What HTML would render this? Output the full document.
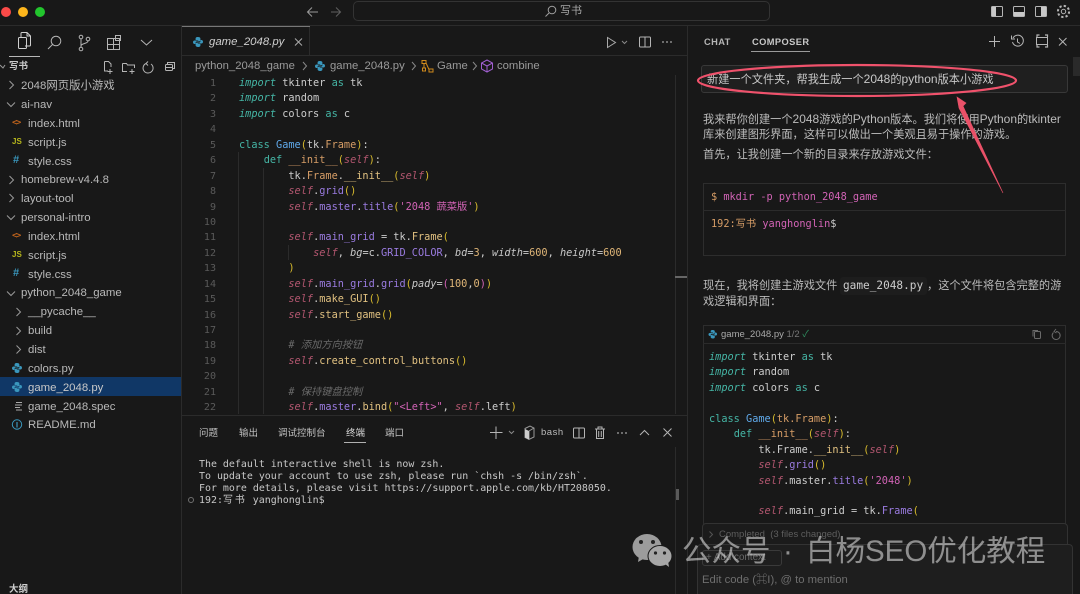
<!DOCTYPE html>
<html><head><meta charset="utf-8">
<style>
*{margin:0;padding:0;box-sizing:border-box}
html,body{width:1080px;height:594px;overflow:hidden;background:#181818}
body{position:relative;font-family:"Liberation Sans","Noto Sans CJK SC",sans-serif;color:#c4c4c4}
.a{position:absolute;white-space:pre}
.l{position:absolute;background:#2b2b2b}
.r{position:absolute;font-size:11.4px;line-height:16px;color:#b9b9b9;white-space:pre}
.code{position:absolute;font-family:"DejaVu Sans Mono","Noto Sans CJK SC",monospace;font-size:10.26px;line-height:15.43px;white-space:pre;color:#cccccc}
.n{position:absolute;left:182px;width:34px;text-align:right;font-family:"DejaVu Sans Mono",monospace;font-size:10.05px;line-height:15.43px;color:#5a5a5a;white-space:pre}
.k{color:#45b5a5;font-style:italic}.c{color:#45b5a5}.g{color:#5fa8e8}.o{color:#d69d66}.y{color:#d7ba2d}
.s{color:#b2566f;font-style:italic}.p{color:#9a7be0}.f{color:#e0c080}.h{color:#d163b5}.m{color:#6a6a6a;font-style:italic}
.i{font-style:italic;color:#c8c8c8}.u{color:#dfb577}
.t{position:absolute;font-size:9.5px;line-height:14px;color:#c0c0c0;white-space:pre}
.ch{position:absolute;font-size:11.2px;line-height:16px;color:#bcbcbc;white-space:pre}
.ch b,.q{font-weight:normal;font-size:12px}
svg{position:absolute;overflow:visible}
.ic{fill:none;stroke:#b5b5b5;stroke-width:1}
</style></head><body>

<!-- title bar -->
<div class="a" style="left:1px;top:7px;width:10px;height:10px;border-radius:50%;background:#fb4a48"></div>
<div class="a" style="left:18px;top:7px;width:10px;height:10px;border-radius:50%;background:#fdb61c"></div>
<div class="a" style="left:35px;top:7px;width:10px;height:10px;border-radius:50%;background:#22c52d"></div>
<svg style="left:0;top:0" width="1080" height="26" class="ic">
<path d="M318 12H308M312 7.500L307.500 12L312 16.500" stroke="#9a9a9a"/>
<path d="M331 12H340M336 7.500L340.500 12L336 16.500" stroke="#5f5f5f"/>
<circle cx="552" cy="10" r="3.800" stroke="#a0a0a0"/><path d="M549 13L545.500 16.500" stroke="#a0a0a0"/>
<rect x="991.500" y="6.500" width="11" height="10" rx="1"/><rect x="992" y="7" width="4" height="9" fill="#c8c8c8" stroke="none"/>
<rect x="1013.500" y="6.500" width="11" height="10" rx="1"/><rect x="1014" y="12" width="10" height="4" fill="#c8c8c8" stroke="none"/>
<rect x="1035.500" y="6.500" width="11" height="10" rx="1"/><rect x="1041" y="7" width="5" height="9" fill="#c8c8c8" stroke="none"/>
<circle cx="1063.500" cy="11.500" r="2.200"/><circle cx="1063.500" cy="11.500" r="5.600" stroke-width="2" stroke-dasharray="2.300 2.100" />
</svg>
<div class="a" style="left:353px;top:1px;width:417px;height:20px;border:1px solid #333;border-radius:5px"></div>
<div class="a" style="left:560px;top:4px;font-size:11px;line-height:14px;color:#a8a8a8">写书</div>
<div class="l" style="left:0;top:25px;width:1080px;height:1px"></div>

<!-- activity -->
<svg style="left:0;top:27px" width="182" height="30" class="ic">
<path d="M21 10.500V6.500a1 1 0 0 1 1-1h5l3.500 3.500V18a1 1 0 0 1-1 1H25M27 5.500V9h3.500" stroke="#d0d0d0"/><rect x="18.500" y="10.500" width="8" height="11" rx="1" stroke="#d0d0d0"/>
<circle cx="56" cy="14" r="4.800"/><path d="M52.500 17.500L48 22"/>
<circle cx="81" cy="10" r="1.800"/><circle cx="81" cy="22" r="1.800"/><circle cx="88" cy="12" r="1.800"/><path d="M81 12V20M88 14c0 3-7 2-7 5"/>
<rect x="107.500" y="11.500" width="6" height="6"/><rect x="113.500" y="11.500" width="6" height="6"/><rect x="107.500" y="17.500" width="6" height="5"/><rect x="113.500" y="17.500" width="6" height="5"/><rect x="115.500" y="8.500" width="5" height="5"/>
<path d="M141 13L146.500 18L152 13"/>
</svg>
<div class="a" style="left:9px;top:56px;width:31px;height:1px;background:#b8b8b8"></div>

<!-- explorer -->
<svg style="left:0;top:59px" width="182" height="16" class="ic">
<path d="M0 6L3 9L5 6" stroke="#999"/>
<path d="M104.500 2.500h4l2.500 2.500v3M104.500 2.500v9.500h3.500M110 10v5M107.500 12.500h5"/>
<path d="M122.500 4.500v8h4.500M122.500 4.500h4l1 1.500h7v3M132 10v5M129.500 12.500h5"/>
<path d="M146 4.500a5 5 0 1 0 5 .5M148 2.500l-2 2 2 2"/>
<rect x="165.500" y="5.500" width="7" height="6" rx="1"/><path d="M167.500 5.500V3.500h7v6h-2M165.500 8.500h7"/>
</svg>
<div class="a" style="left:9px;top:60px;font-size:9.5px;line-height:13px;color:#c8c8c8;font-weight:bold">写书</div>
<svg style="left:0;top:0" width="182" height="360" fill="none" stroke="#9a9a9a">
<path d="M9.500 81l4 4l-4 4M7 102.500l4 4l4-4M9.500 176l4 4l-4 4M9.500 194l4 4l-4 4M7 215.500l4 4l4-4M7 291.500l4 4l4-4M16.500 308l4 4l-4 4M16.500 327l4 4l-4 4M16.500 345.500l4 4l-4 4"/>
</svg>
<div class="r" style="left:21px;top:78px">2048网页版小游戏</div>
<div class="r" style="left:21px;top:97px">ai-nav</div>
<div class="r" style="left:28px;top:116px">index.html</div>
<div class="r" style="left:28px;top:135px">script.js</div>
<div class="r" style="left:28px;top:154px">style.css</div>
<div class="r" style="left:21px;top:172px">homebrew-v4.4.8</div>
<div class="r" style="left:21px;top:191px">layout-tool</div>
<div class="r" style="left:21px;top:210px">personal-intro</div>
<div class="r" style="left:28px;top:229px">index.html</div>
<div class="r" style="left:28px;top:248px">script.js</div>
<div class="r" style="left:28px;top:267px">style.css</div>
<div class="r" style="left:21px;top:285px">python_2048_game</div>
<div class="r" style="left:28px;top:304px">__pycache__</div>
<div class="r" style="left:28px;top:323px">build</div>
<div class="r" style="left:28px;top:342px">dist</div>
<div class="r" style="left:28px;top:361px">colors.py</div>
<div class="a" style="left:0;top:377px;width:181px;height:19px;background:#103766"></div>
<div class="r" style="left:28px;top:380px;color:#c8c8c8">game_2048.py</div>
<div class="r" style="left:28px;top:399px">game_2048.spec</div>
<div class="r" style="left:28px;top:417px">README.md</div>
<!-- file icons -->
<div class="a" style="left:12px;top:117px;font:bold 9px/12px 'DejaVu Sans Mono';color:#c0641c;letter-spacing:-1.500px">&lt;&gt;</div>
<div class="a" style="left:12px;top:230px;font:bold 9px/12px 'DejaVu Sans Mono';color:#c0641c;letter-spacing:-1.500px">&lt;&gt;</div>
<div class="a" style="left:12px;top:136px;font:bold 8px/12px 'Liberation Sans';color:#b7b71c">JS</div>
<div class="a" style="left:12px;top:249px;font:bold 8px/12px 'Liberation Sans';color:#b7b71c">JS</div>
<div class="a" style="left:13px;top:154px;font:bold 11px/13px 'Liberation Sans';color:#3a97bd">#</div>
<div class="a" style="left:13px;top:267px;font:bold 11px/13px 'Liberation Sans';color:#3a97bd">#</div>
<svg style="left:0;top:0" width="1080" height="594">
<g fill="#3a97bd">
<g transform="translate(12,363)"><path d="M5 0C3 0 2.600 .8 2.600 1.600V3H5.200V3.500H1.600C.6 3.500 0 4.200 0 5.200C0 6.200 .6 7 1.600 7H2.600V5.800C2.600 5 3.200 4.400 4 4.400H6C6.800 4.400 7.400 3.800 7.400 3V1.600C7.400 .6 6.400 0 5 0Z"/><path transform="rotate(180 5 5)" d="M5 0C3 0 2.600 .8 2.600 1.600V3H5.200V3.500H1.600C.6 3.500 0 4.200 0 5.200C0 6.200 .6 7 1.600 7H2.600V5.800C2.600 5 3.200 4.400 4 4.400H6C6.800 4.400 7.400 3.800 7.400 3V1.600C7.400 .6 6.400 0 5 0Z"/></g>
<g transform="translate(12,382)"><path d="M5 0C3 0 2.600 .8 2.600 1.600V3H5.200V3.500H1.600C.6 3.500 0 4.200 0 5.200C0 6.200 .6 7 1.600 7H2.600V5.800C2.600 5 3.200 4.400 4 4.400H6C6.800 4.400 7.400 3.800 7.400 3V1.600C7.400 .6 6.400 0 5 0Z"/><path transform="rotate(180 5 5)" d="M5 0C3 0 2.600 .8 2.600 1.600V3H5.200V3.500H1.600C.6 3.500 0 4.200 0 5.200C0 6.200 .6 7 1.600 7H2.600V5.800C2.600 5 3.200 4.400 4 4.400H6C6.800 4.400 7.400 3.800 7.400 3V1.600C7.400 .6 6.400 0 5 0Z"/></g>
<g transform="translate(193,37)"><path d="M5 0C3 0 2.600 .8 2.600 1.600V3H5.200V3.500H1.600C.6 3.500 0 4.200 0 5.200C0 6.200 .6 7 1.600 7H2.600V5.800C2.600 5 3.200 4.400 4 4.400H6C6.800 4.400 7.400 3.800 7.400 3V1.600C7.400 .6 6.400 0 5 0Z"/><path transform="rotate(180 5 5)" d="M5 0C3 0 2.600 .8 2.600 1.600V3H5.200V3.500H1.600C.6 3.500 0 4.200 0 5.200C0 6.200 .6 7 1.600 7H2.600V5.800C2.600 5 3.200 4.400 4 4.400H6C6.800 4.400 7.400 3.800 7.400 3V1.600C7.400 .6 6.400 0 5 0Z"/></g>
<g transform="translate(315,61)"><path d="M5 0C3 0 2.600 .8 2.600 1.600V3H5.200V3.500H1.600C.6 3.500 0 4.200 0 5.200C0 6.200 .6 7 1.600 7H2.600V5.800C2.600 5 3.200 4.400 4 4.400H6C6.800 4.400 7.400 3.800 7.400 3V1.600C7.400 .6 6.400 0 5 0Z"/><path transform="rotate(180 5 5)" d="M5 0C3 0 2.600 .8 2.600 1.600V3H5.200V3.500H1.600C.6 3.500 0 4.200 0 5.200C0 6.200 .6 7 1.600 7H2.600V5.800C2.600 5 3.200 4.400 4 4.400H6C6.800 4.400 7.400 3.800 7.400 3V1.600C7.400 .6 6.400 0 5 0Z"/></g>
<g transform="translate(708.500,330) scale(.85)"><path d="M5 0C3 0 2.600 .8 2.600 1.600V3H5.200V3.500H1.600C.6 3.500 0 4.200 0 5.200C0 6.200 .6 7 1.600 7H2.600V5.800C2.600 5 3.200 4.400 4 4.400H6C6.800 4.400 7.400 3.800 7.400 3V1.600C7.400 .6 6.400 0 5 0Z"/><path transform="rotate(180 5 5)" d="M5 0C3 0 2.600 .8 2.600 1.600V3H5.200V3.500H1.600C.6 3.500 0 4.200 0 5.200C0 6.200 .6 7 1.600 7H2.600V5.800C2.600 5 3.200 4.400 4 4.400H6C6.800 4.400 7.400 3.800 7.400 3V1.600C7.400 .6 6.400 0 5 0Z"/></g>
</g>
<path d="M16 402.500h6M15 405h7M15 407.500h5M16 410h6" stroke="#aaa" fill="none"/>
<circle cx="17" cy="424.500" r="4.700" fill="none" stroke="#3a97bd"/><path d="M17 422v5.500" stroke="#3a97bd" stroke-width="1.200"/>
</svg>
<div class="a" style="left:9px;top:583px;font-size:9.500px;line-height:13px;color:#d0d0d0;font-weight:bold">大纲</div>

<div class="l" style="left:181px;top:26px;width:1px;height:568px"></div>

<!-- editor tabs -->
<div class="a" style="left:182px;top:26px;width:128px;height:1px;background:#777"></div>
<div class="l" style="left:182px;top:55px;width:505px;height:1px"></div>
<div class="l" style="left:309px;top:27px;width:1px;height:29px"></div>
<div class="a" style="left:209px;top:35px;font-size:11.4px;line-height:15px;font-style:italic;color:#cfcfcf">game_2048.py</div>
<svg style="left:0;top:0" width="700" height="60" class="ic">
<path d="M295 38.500l7 7M302 38.500l-7 7" stroke="#aaa"/>
<path d="M607.500 37.500v10l8-5z" stroke="#aaa"/><path d="M622 41l2.500 2.500l2.500-2.500" stroke="#888"/>
<rect x="639.500" y="37" width="11" height="10" rx="1"/><path d="M645 37v10"/>
<g fill="#aaa" stroke="none"><circle cx="663" cy="42" r=".9"/><circle cx="667" cy="42" r=".9"/><circle cx="671" cy="42" r=".9"/></g>
</svg>

<!-- breadcrumb -->
<div class="a" style="left:195px;top:59px;font-size:11.3px;line-height:15px;color:#9a9a9a">python_2048_game</div>
<div class="a" style="left:330px;top:59px;font-size:11.3px;line-height:15px;color:#9a9a9a">game_2048.py</div>
<div class="a" style="left:437px;top:59px;font-size:11.3px;line-height:15px;color:#9a9a9a">Game</div>
<div class="a" style="left:497px;top:59px;font-size:11.3px;line-height:15px;color:#9a9a9a">combine</div>
<svg style="left:0;top:58px" width="700" height="18" fill="none" stroke="#888">
<path d="M303 4l3.500 4l-3.500 4M412 4l3.500 4l-3.500 4M473 4l3.500 4l-3.500 4"/>
<g stroke="#d08a1c"><rect x="422" y="2.500" width="4" height="3"/><rect x="429" y="11" width="4" height="3"/><path d="M426 5l3 6.500M424 6v4"/><rect x="422.500" y="10" width="3" height="3"/></g>
<g stroke="#a05fd0"><path d="M487 2l5.500 3v6L487 14l-5.500-3V5zM481.500 5l5.500 3l5.500-3M487 8v6"/></g>
</svg>

<!-- line numbers -->
<div class="n" style="top:76px">1
2
3
4
5
6
7
8
9
10
11
12
13
14
15
16
17
18
19
20
21
22</div>
<!-- indent guides -->
<div class="l" style="left:238px;top:152px;width:1px;height:262px"></div>
<div class="l" style="left:263px;top:168px;width:1px;height:246px"></div>
<div class="l" style="left:288px;top:245px;width:1px;height:15px"></div>
<div class="l" style="left:675px;top:75px;width:1px;height:339px"></div>
<div class="a" style="left:675px;top:276px;width:12px;height:2px;background:#666"></div>

<div class="code" style="left:239px;top:76px"><span class="k">import</span> tkinter <span class="c">as</span> tk
<span class="k">import</span> random
<span class="k">import</span> colors <span class="c">as</span> c

<span class="c">class</span> <span class="g">Game</span><span class="y">(</span>tk.<span class="o">Frame</span><span class="y">)</span>:
    <span class="c">def</span> <span class="o">__init__</span><span class="y">(</span><span class="s">self</span><span class="y">)</span>:
        tk.<span class="o">Frame</span>.<span class="f">__init__</span><span class="y">(</span><span class="s">self</span><span class="y">)</span>
        <span class="s">self</span>.<span class="p">grid</span><span class="y">()</span>
        <span class="s">self</span>.<span class="p">master</span>.<span class="p">title</span><span class="y">(</span><span class="h">'2048 蔬菜版'</span><span class="y">)</span>

        <span class="s">self</span>.<span class="p">main_grid</span> = tk.<span class="f">Frame</span><span class="y">(</span>
            <span class="s">self</span>, <span class="i">bg</span>=c.<span class="p">GRID_COLOR</span>, <span class="i">bd</span>=<span class="u">3</span>, <span class="i">width</span>=<span class="u">600</span>, <span class="i">height</span>=<span class="u">600</span>
        <span class="y">)</span>
        <span class="s">self</span>.<span class="p">main_grid</span>.<span class="p">grid</span><span class="y">(</span><span class="i">pady</span>=<span class="h">(</span><span class="u">100</span>,<span class="u">0</span><span class="h">)</span><span class="y">)</span>
        <span class="s">self</span>.<span class="f">make_GUI</span><span class="y">()</span>
        <span class="s">self</span>.<span class="f">start_game</span><span class="y">()</span>

        <span class="m"># 添加方向按钮</span>
        <span class="s">self</span>.<span class="f">create_control_buttons</span><span class="y">()</span>

        <span class="m"># 保持键盘控制</span>
        <span class="s">self</span>.<span class="p">master</span>.<span class="f">bind</span><span class="y">(</span><span class="h">"&lt;Left&gt;"</span>, <span class="s">self</span>.left<span class="y">)</span></div>

<!-- terminal panel -->
<div class="a" style="left:182px;top:415px;width:505px;height:179px;background:#181818;border-top:1px solid #2b2b2b"></div>
<div class="t" style="left:199px;top:427px">问题</div>
<div class="t" style="left:239px;top:427px">输出</div>
<div class="t" style="left:278px;top:427px">调试控制台</div>
<div class="t" style="left:346px;top:427px;color:#d8d8d8">终端</div>
<div class="t" style="left:385px;top:427px">端口</div>
<div class="a" style="left:344px;top:442px;width:22px;height:1px;background:#b0b0b0"></div>
<svg style="left:0;top:420px" width="690" height="26" class="ic">
<path d="M496 6.500V19M490 12.500H502.500"/><path d="M509 11l2.500 2.500l2.500-2.500" stroke="#888"/>
<path d="M525 8.500l5-2.500l4 2v9l-5 2.500l-4-2z" stroke="#999"/><path d="M529 11l5-3M529 11v8.500" stroke="#999"/><path d="M525 9l4 2v8.500l-4-2z" fill="#ccc" stroke="none"/>
<rect x="573.500" y="8" width="11" height="10" rx="1"/><path d="M579 8v10"/>
<path d="M595 9h10M598 9V7h4v2M596.500 9v9.500h7V9M598.700 11v6M601.300 11v6"/>
<g fill="#aaa" stroke="none"><circle cx="618" cy="13" r=".9"/><circle cx="622" cy="13" r=".9"/><circle cx="626" cy="13" r=".9"/></g>
<path d="M640 15l4.500-4.500l4.500 4.500"/><path d="M663.500 8.500l8 8M671.500 8.500l-8 8"/>
</svg>
<div class="a" style="left:541px;top:426px;font-size:9.500px;line-height:14px;color:#bbb;letter-spacing:.5px">bash</div>
<div class="code" style="left:199px;top:459px;line-height:12.100px;color:#c8c8c8;font-size:9.95px">The default interactive shell is now zsh.
To update your account to use zsh, please run `chsh -s /bin/zsh`.
For more details, please visit https://support.apple.com/kb/HT208050.
192:<span style="letter-spacing:2px">写书</span> yanghonglin$</div>
<div class="a" style="left:188px;top:497px;width:6px;height:6px;border:1px solid #707070;border-radius:50%"></div>
<div class="l" style="left:675px;top:447px;width:1px;height:147px"></div>
<div class="a" style="left:676px;top:489px;width:3px;height:11px;background:#5a5a5a"></div>

<!-- right panel -->
<div class="l" style="left:687px;top:26px;width:1px;height:568px"></div>
<div class="a" style="left:704px;top:35px;font-size:9.300px;line-height:14px;font-weight:bold;color:#b5b5b5;letter-spacing:.4px">CHAT</div>
<div class="a" style="left:752px;top:35px;font-size:9.300px;line-height:14px;font-weight:bold;color:#c8c8c8;letter-spacing:.4px">COMPOSER</div>
<div class="a" style="left:751px;top:51px;width:59px;height:1px;background:#9a9a9a"></div>
<svg style="left:0;top:26px" width="1080" height="30" class="ic">
<path d="M994.500 10V21M989 15.500H1000"/>
<path d="M1013 12a5.500 5.500 0 1 1 -.5 4M1011.500 9.500v3.500h3.500M1017.500 12.500v3.500l2.500 1.500"/>
<path d="M1037 11v-2h2.500M1045 9h2.500v2M1047.500 19v2h-2.500M1039.500 21H1037v-2" stroke-width="1.200"/><rect x="1036.500" y="11.500" width="11" height="7"/>
<path d="M1059 12l7.500 7.500M1066.500 12l-7.500 7.500"/>
</svg>
<div class="a" style="left:1073px;top:57px;width:7px;height:19px;background:#2a2a2a"></div>

<div class="a" style="left:701px;top:65px;width:367px;height:28px;background:#1f1f1f;border:1px solid #383838;border-radius:3px"></div>
<div class="ch" style="left:707px;top:71px;color:#c8c8c8">新建一个文件夹，帮我生成一个<b>2048</b>的<b>python</b>版本小游戏</div>

<div class="ch" style="left:703px;top:111px">我来帮你创建一个<b>2048</b>游戏的<b>Python</b>版本。我们将使用<b>Python</b>的<b>tkinter</b></div>
<div class="ch" style="left:703px;top:127px">库来创建图形界面，这样可以做出一个美观且易于操作的游戏。</div>
<div class="ch" style="left:703px;top:147px">首先，让我创建一个新的目录来存放游戏文件：</div>

<div class="a" style="left:703px;top:183px;width:363px;height:73px;border:1px solid #2d2d2d"></div>
<div class="l" style="left:703px;top:210px;width:363px;height:1px"></div>
<div class="code" style="left:711px;top:190px;line-height:15px"><span style="color:#d69d66">$</span> <span class="h">mkdir -p python_2048_game</span></div>
<div class="code" style="left:711px;top:217px;line-height:15px"><span style="color:#d69d66">192:写书</span> <span class="h">yanghonglin</span>$</div>

<div class="a" style="left:840px;top:277px;width:87px;height:18px;background:#1d1d1d;border-radius:3px"></div>
<div class="ch" style="left:703px;top:278px">现在，我将创建主游戏文件</div>
<div class="code" style="left:843px;top:278px;line-height:16px;font-size:11.100px">game_2048.py</div>
<div class="ch" style="left:927px;top:278px">，这个文件将包含完整的游</div>
<div class="ch" style="left:703px;top:294px">戏逻辑和界面：</div>

<div class="a" style="left:703px;top:325px;width:363px;height:199px;border:1px solid #2d2d2d;border-bottom:0"></div>
<div class="l" style="left:703px;top:343px;width:363px;height:1px"></div>
<div class="a" style="left:721px;top:328px;font-size:9.500px;line-height:13px;color:#aaa">game_2048.py <span style="color:#777">1/2</span> <span style="color:#2f8f5f">✓</span></div>
<svg style="left:0;top:325px" width="1080" height="20" fill="none" stroke="#6a6a6a">
<rect x="1034.500" y="6.500" width="6" height="7" rx="1"/><path d="M1033 11.500V5.500h5"/>
<path d="M1056 6.500a4 4 0 1 1 -2.500 1M1056 4l-2 2.500l2.500 1.500"/>
</svg>

<div class="code" style="left:709px;top:350px"><span class="k">import</span> tkinter <span class="c">as</span> tk
<span class="k">import</span> random
<span class="k">import</span> colors <span class="c">as</span> c

<span class="c">class</span> <span class="g">Game</span><span class="y">(</span><span class="o">tk.Frame</span><span class="y">)</span>:
    <span class="c">def</span> <span class="o">__init__</span><span class="y">(</span><span class="s">self</span><span class="y">)</span>:
        tk.Frame.<span class="f">__init__</span><span class="y">(</span><span class="s">self</span><span class="y">)</span>
        <span class="s">self</span>.<span class="p">grid</span><span class="y">()</span>
        <span class="s">self</span>.master.<span class="p">title</span><span class="y">(</span><span class="h">'2048'</span><span class="y">)</span>

        <span class="s">self</span>.main_grid = tk.<span class="p">Frame</span><span class="y">(</span></div>

<div class="a" style="left:702px;top:523px;width:366px;height:30px;background:#1b1b1b;border:1px solid #323232;border-radius:4px 4px 0 0"></div>
<svg style="left:708px;top:530px" width="8" height="10" fill="none" stroke="#555"><path d="M1.500 1.500l3 3l-3 3"/></svg>
<div class="a" style="left:719px;top:528px;font-size:9.500px;line-height:13px;color:#5e5e5e">Completed  (3 files changed)</div>
<div class="a" style="left:697px;top:544px;width:376px;height:50px;background:#1e1e1e;border:1px solid #333;border-bottom:0;border-radius:4px 4px 0 0"></div>
<div class="a" style="left:702px;top:550px;width:80px;height:16px;border:1px solid #3a3a3a;border-radius:3px;font-size:9.800px;line-height:14px;color:#6a6a6a;padding-left:3px">+ Add context</div>
<div class="a" style="left:702px;top:573px;font-size:11.300px;line-height:14px;color:#6e6e6e">Edit code (⌘I), @ to mention</div>

<!-- annotation -->
<svg style="left:0;top:0" width="1080" height="594" fill="none">
<ellipse cx="857" cy="80.500" rx="159" ry="15.500" stroke="#f0526c" stroke-width="2.200"/>
<path d="M957 97L966 103L963 106L1003 193L959 108Z" fill="#ea5168" stroke="#ea5168" stroke-width=".6"/>
</svg>

<!-- watermark -->
<svg style="left:632px;top:533px" width="42" height="34">
<ellipse cx="15" cy="14" rx="14.500" ry="13" fill="#9c9c9c"/><path d="M7 23l-1 6l7-4z" fill="#9c9c9c"/>
<ellipse cx="28" cy="23" rx="12" ry="10.500" fill="#a6a6a6" stroke="#181818"/><path d="M33 31l4 3l-1-6z" fill="#a6a6a6"/>
<circle cx="9" cy="9" r="2" fill="#222"/><circle cx="21" cy="9" r="2" fill="#222"/><circle cx="23.500" cy="20" r="1.600" fill="#222"/><circle cx="32.500" cy="20" r="1.600" fill="#222"/>
</svg>
<div class="a" style="left:682px;top:534px;font-size:29.500px;line-height:36px;color:rgba(255,255,255,.5)">公众号</div>
<div class="a" style="left:783px;top:534px;font-size:29.500px;line-height:36px;color:rgba(255,255,255,.5)">·</div>
<div class="a" style="left:806px;top:534px;font-size:29.500px;line-height:36px;color:rgba(255,255,255,.5)">白杨SEO优化教程</div>

</body></html>
